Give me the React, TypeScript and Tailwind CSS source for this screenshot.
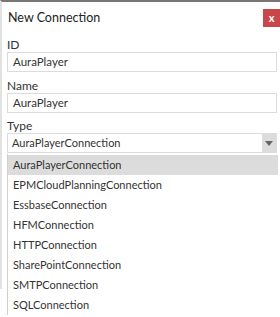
const types = [
  'AuraPlayerConnection',
  'EPMCloudPlanningConnection',
  'EssbaseConnection',
  'HFMConnection',
  'HTTPConnection',
  'SharePointConnection',
  'SMTPConnection',
  'SQLConnection',
]

function Field({ label, value, className }: { label: string; value: string; className?: string }) {
  return (
    <div className={className}>
      <div className="text-[12px] leading-[14px] text-[#333]">{label}</div>
      <div className="h-[20px] border border-[#dcdcdc] px-[5px] text-[11.5px] leading-[18px] text-[#333]">{value}</div>
    </div>
  )
}

export default function App() {
  return (
    <div
      className="relative w-[280px] h-[317px] bg-white overflow-hidden"
      style={{ fontFamily: 'Lato, "Open Sans", sans-serif' }}
    >
      <div className="h-[289px] border-t-2 border-t-[#777] border-l-2 border-l-[#e2e2e2] bg-white pl-[5px] pr-[3px]">
        <div className="flex justify-between items-start pt-[7px]">
          <span className="text-[12.5px] leading-[16px] text-[#222] pl-[1px] pt-[1px]">New Connection</span>
          <button className="-mr-[3px] w-[17px] h-[18px] bg-[#c9474b] text-white text-[11px] font-bold leading-[16px] flex items-center justify-center">
            x
          </button>
        </div>
        <Field label="ID" value="AuraPlayer" className="mt-[11px]" />
        <Field label="Name" value="AuraPlayer" className="mt-[7px]" />
        <div className="mt-[6px]">
          <div className="text-[12px] leading-[14px] text-[#333]">Type</div>
          <div className="h-[20px] border border-[#dcdcdc] flex text-[11px] leading-[18px] text-[#333]">
            <span className="flex-1 pl-[4px]">AuraPlayerConnection</span>
            <span className="w-[14px] bg-[#dcdcdc] flex items-center justify-center">
              <svg width="8" height="5" viewBox="0 0 8 5">
                <path d="M0 0h8L4 5z" fill="#666" />
              </svg>
            </span>
          </div>
        </div>
      </div>
      <div className="absolute top-[154px] left-[7px] w-[271px] bg-white border-l border-l-[#cfcfcf] pt-[1px]">
        {types.map((t, i) => (
          <div
            key={t}
            className={`h-[20px] pl-[5px] text-[11px] leading-[20px] text-[#333] ${i === 0 ? 'bg-[#dcdcdc]' : ''}`}
          >
            {t}
          </div>
        ))}
      </div>
    </div>
  )
}
